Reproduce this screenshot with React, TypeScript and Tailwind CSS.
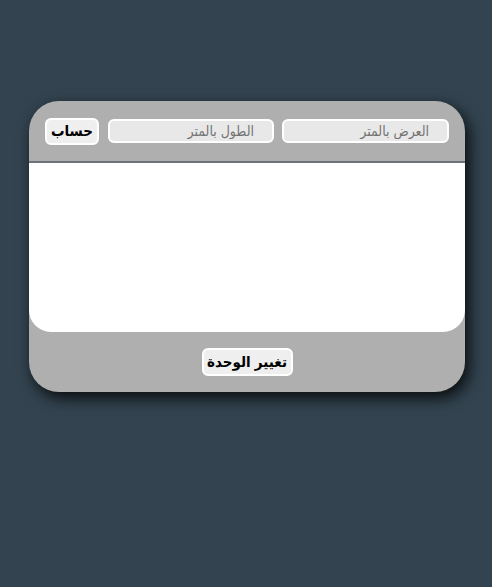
import React from "react";

export default function App() {
  return (
    <div className="min-h-[587px] w-full bg-[#334450] pt-[101px] pl-[29px]" style={{ fontFamily: '"Liberation Sans", "DejaVu Sans Condensed", "DejaVu Sans", sans-serif' }}>
      <div className="w-[436px] h-[291px] rounded-[30px] bg-[#afafaf] shadow-[4px_6px_16px_rgba(0,0,0,0.85)] flex flex-col overflow-hidden">
        <div dir="rtl" className="h-[60px] flex items-center gap-2 px-4 shrink-0">
          <input
            placeholder="العرض بالمتر"
            className="w-[167px] h-[24px] border-2 border-white rounded-[6px] bg-[#e8e8e8] pr-[18px] text-[14px] text-black placeholder:text-[#737373] outline-none"
          />
          <input
            placeholder="الطول بالمتر"
            className="w-[166px] h-[24px] border-2 border-white rounded-[6px] bg-[#e8e8e8] pr-[18px] text-[14px] text-black placeholder:text-[#737373] outline-none"
          />
          <button className="mr-[1px] w-[54px] h-[27px] p-0 border-2 border-white rounded-[6px] bg-[#efefef] text-[15px] font-bold text-black flex items-center justify-center whitespace-nowrap">
            حساب
          </button>
        </div>
        <div className="h-[2px] bg-[#6b747c] shrink-0" />
        <div className="h-[169px] bg-white rounded-b-[22px] shrink-0" />
        <div className="flex-1 flex items-center justify-center">
          <button dir="rtl" className="w-[91px] h-[28px] p-0 border-2 border-white rounded-[6px] bg-[#efefef] text-[15px] font-bold text-black flex items-center justify-center whitespace-nowrap">
            تغيير الوحدة
          </button>
        </div>
      </div>
    </div>
  );
}
